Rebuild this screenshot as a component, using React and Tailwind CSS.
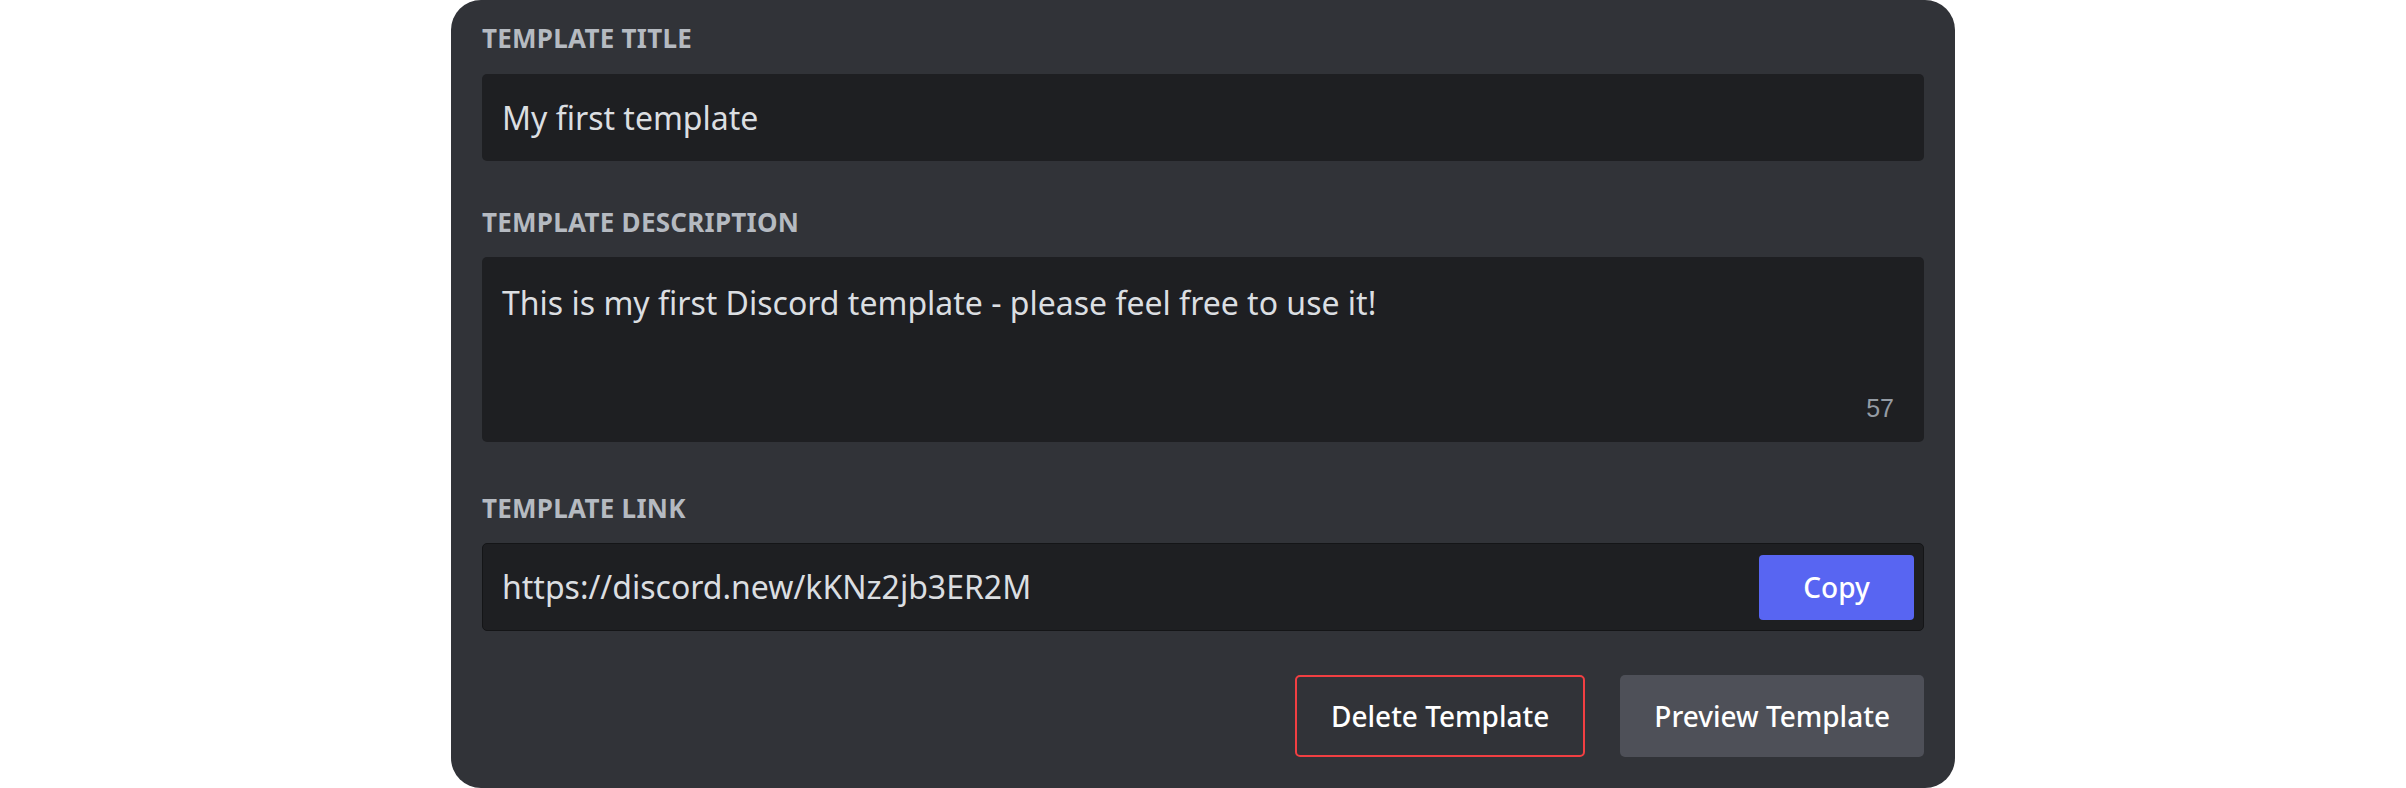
import React from "react";

const labelCls =
  "text-[26px] leading-[32px] font-bold uppercase tracking-[0.01em] text-[#b5bac1]";

function Field({ label, className = "", children }) {
  return (
    <div className={`flex flex-col ${className}`}>
      <div className={`${labelCls} mb-[20px]`}>{label}</div>
      {children}
    </div>
  );
}

export default function App() {
  return (
    <div className="min-h-screen bg-white flex justify-center font-['Noto_Sans',sans-serif]">
      <div className="w-[1504px] h-[788px] bg-[#313338] rounded-[30px] px-[31px] pt-[22px] pb-[31px] flex flex-col">
        {/* Title */}
        <Field label="Template Title">
          <div className="h-[87px] rounded-[5px] bg-[#1e1f22] pl-5 flex items-center text-[32px] text-[#dbdee1]">
            My first template
          </div>
        </Field>

        {/* Description */}
        <div className="flex flex-col mt-[45px]">
          <div className={`${labelCls} mb-[19px]`}>Template Description</div>
          <div className="h-[185px] rounded-[5px] bg-[#1e1f22] flex flex-col">
            <div className="pl-5 pt-[24px] text-[32px] leading-[44px] text-[#dbdee1]">
              This is my first Discord template - please feel free to use it!
            </div>
            <div className="mt-auto self-end pr-[30px] pb-[19px] text-[25px] leading-[30px] text-[#949ba4] font-['Liberation_Sans',sans-serif]">
              57
            </div>
          </div>
        </div>

        {/* Link */}
        <div className="flex flex-col mt-[50px]">
          <div className={`${labelCls} mb-[19px]`}>Template Link</div>
          <div className="h-[88px] rounded-[5px] bg-[#1e1f22] border border-[#141517] flex items-center pl-[19px] pr-[9px]">
            <div className="flex-1 text-[32px] text-[#dbdee1]">
              https://discord.new/kKNz2jb3ER2M
            </div>
            <button className="h-[65px] w-[155px] rounded-[4px] bg-[#5865f2] text-white text-[28px] font-medium">
              Copy
            </button>
          </div>
        </div>

        {/* Actions */}
        <div className="mt-[44px] flex justify-end gap-[35px]">
          <button className="h-[82px] px-[34px] rounded-[5px] border-2 border-[#f23f42] text-white text-[28px] font-medium">
            Delete Template
          </button>
          <button className="h-[82px] px-[34px] rounded-[5px] bg-[#4e5058] text-white text-[28px] font-medium">
            Preview Template
          </button>
        </div>
      </div>
    </div>
  );
}
